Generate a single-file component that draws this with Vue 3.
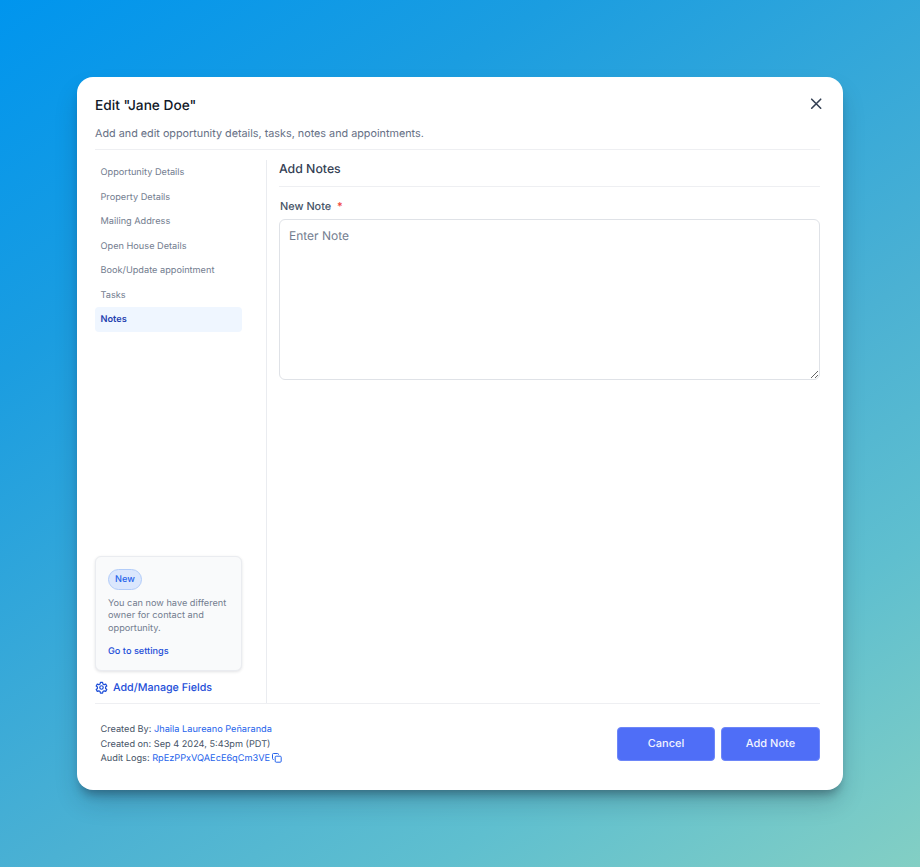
<script setup>
const navItems = ['Opportunity Details', 'Property Details', 'Mailing Address', 'Open House Details', 'Book/Update appointment', 'Tasks', 'Notes']
</script>

<template>
  <div class="page">
    <section class="modal">
      <header class="head">
        <div class="title-row">
          <h1>Edit "Jane Doe"</h1>
          <svg class="close" width="16" height="16" viewBox="0 0 16 16" fill="none" stroke="#344054" stroke-width="1.6" stroke-linecap="round"><path d="M3.7 3.2l9 9M12.7 3.2l-9 9"/></svg>
        </div>
        <p class="sub">Add and edit opportunity details, tasks, notes and appointments.</p>
      </header>
      <div class="body">
        <aside class="side">
          <nav class="nav">
            <a v-for="item in navItems" :key="item" class="nav-item" :class="{ active: item === 'Notes' }">{{ item }}</a>
          </nav>
          <div class="promo">
            <span class="badge">New</span>
            <p>You can now have different owner for contact and opportunity.</p>
            <a class="promo-link">Go to settings</a>
          </div>
          <a class="manage">
            <svg width="13" height="13" viewBox="0 0 24 24" fill="none" stroke="#1d4ed8" stroke-width="2.2" stroke-linejoin="round"><path d="M10 2.5h4l.6 3 2.3 1.3 2.9-1 2 3.4-2.3 2v2.6l2.3 2-2 3.4-2.9-1-2.3 1.3-.6 3h-4l-.6-3-2.3-1.3-2.9 1-2-3.4 2.3-2v-2.6l-2.3-2 2-3.4 2.9 1 2.3-1.3z"/><circle cx="12" cy="12" r="3.2"/></svg>
            Add/Manage Fields
          </a>
        </aside>
        <main class="main">
          <h2>Add Notes</h2>
          <label class="label" for="note">New Note <span class="req">*</span></label>
          <textarea id="note" class="input" placeholder="Enter Note"></textarea>
        </main>
      </div>
      <footer class="foot">
        <div class="meta">
          <div class="meta-row">Created By: <a>Jhaila Laureano Peñaranda</a></div>
          <div class="meta-row">Created on: Sep 4 2024, 5:43pm (PDT)</div>
          <div class="meta-row">Audit Logs: <a>RpEzPPxVQAEcE6qCm3VE</a>
            <svg class="copy" width="10" height="10" viewBox="0 0 10 10" fill="none" stroke="#2563eb" stroke-width="1"><rect x="3.2" y="3.2" width="6" height="6" rx="1"/><path d="M1.8 6.5H1.5a1 1 0 0 1-1-1V1.5a1 1 0 0 1 1-1h4a1 1 0 0 1 1 1v.3"/></svg>
          </div>
        </div>
        <div class="actions">
          <button type="button" class="btn cancel">Cancel</button>
          <button type="button" class="btn">Add Note</button>
        </div>
      </footer>
    </section>
  </div>
</template>

<style scoped>
.page {
  width: 920px;
  height: 867px;
  box-sizing: border-box;
  padding: 77px;
  background: linear-gradient(146deg, #0095ee 0%, #1b9de0 25%, #4bb1d3 60%, #5fbfcf 78%, #83cfc4 100%);
  font-family: Inter, "Liberation Sans", sans-serif;
  text-rendering: geometricPrecision;
  overflow: hidden;
}
.modal {
  width: 766px;
  height: 713px;
  box-sizing: border-box;
  padding: 0 23px 0 18px;
  background: #fff;
  border-radius: 16px;
  box-shadow: 0 8px 10px -4px rgba(16, 24, 40, .35), 0 14px 26px -4px rgba(16, 24, 40, .22);
  display: flex;
  flex-direction: column;
}
.head {
  height: 73px;
  flex: none;
  box-sizing: border-box;
  border-bottom: 1px solid #eeeff2;
}
.title-row {
  height: 28px;
  margin-top: 15px;
  display: flex;
  align-items: center;
  justify-content: space-between;
}
h1 {
  margin: 0;
  font-size: 13.7px;
  font-weight: 500;
  color: #101828;
}
.close { margin-right: -4px; margin-top: -5px; }
.sub {
  margin: 6px 0 0;
  font-size: 10.8px;
  line-height: 16px;
  color: #667085;
}
.body {
  flex: 1;
  min-height: 0;
  display: flex;
  padding-top: 10px;
}
.side {
  width: 172px;
  flex: none;
  box-sizing: border-box;
  padding-right: 24px;
  border-right: 1px solid #eaecf0;
  display: flex;
  flex-direction: column;
}
.nav {
  flex: 1;
  display: flex;
  flex-direction: column;
}
.nav-item {
  height: 24.5px;
  line-height: 26.5px;
  padding-left: 5.5px;
  font-size: 9.2px;
  color: #737d8f;
  border-radius: 4px;
}
.nav-item.active {
  background: #eff6ff;
  color: #1e40af;
  font-weight: 600;
}
.promo {
  height: 115px;
  box-sizing: border-box;
  padding: 12px 12px 0;
  background: #f9fafb;
  border: 1px solid #eaecf0;
  border-radius: 6px;
  box-shadow: 0 1px 3px rgba(16, 24, 40, .12);
}
.badge {
  display: block;
  width: fit-content;
  height: 21px;
  line-height: 20px;
  box-sizing: border-box;
  padding: 0 6px;
  font-size: 9.2px;
  font-weight: 500;
  color: #2563eb;
  background: #dbe7fd;
  border: 1px solid #b2ccf9;
  border-radius: 11px;
}
.promo p {
  margin: 8px 0 0;
  font-size: 9.2px;
  line-height: 12.3px;
  color: #737d8f;
}
.promo-link {
  display: block;
  margin-top: 11px;
  font-size: 9.2px;
  line-height: 12px;
  font-weight: 500;
  color: #1d4ed8;
}
.manage {
  height: 32px;
  display: flex;
  align-items: center;
  gap: 5px;
  font-size: 10.7px;
  font-weight: 500;
  color: #1d4ed8;
}
.main {
  flex: 1;
  min-width: 0;
  padding-left: 12px;
  display: flex;
  flex-direction: column;
}
h2 {
  margin: 0;
  height: 26px;
  line-height: 18px;
  font-size: 12.3px;
  font-weight: 500;
  color: #344054;
  border-bottom: 1px solid #eeeff2;
}
.label {
  margin: 11px 0 0 1px;
  height: 16px;
  line-height: 16px;
  font-size: 10.9px;
  font-weight: 500;
  color: #475467;
}
.req { color: #f04438; margin-left: 3px; }
.input {
  display: block;
  margin-top: 5px;
  width: 100%;
  height: 161px;
  box-sizing: border-box;
  padding: 8px 9px;
  border: 1px solid #dfe2e7;
  border-radius: 6px;
  font: 400 12px/16px Inter, "Liberation Sans", sans-serif;
  text-rendering: geometricPrecision;
  color: #344054;
  outline: none;
}
.input::placeholder { color: #737d8f; opacity: 1; }
.foot {
  flex: none;
  height: 87px;
  box-sizing: border-box;
  border-top: 1px solid #eeeff2;
  padding: 18px 0 0 5.5px;
  display: flex;
  justify-content: space-between;
  align-items: flex-start;
}
.meta {
  font-size: 9.2px;
  color: #475467;
}
.meta-row {
  height: 14.7px;
  line-height: 15px;
  white-space: nowrap;
}
.meta a { color: #2563eb; }
.copy { vertical-align: -1.5px; margin-left: 2px; }
.actions {
  display: flex;
  gap: 6px;
  margin-top: 5px;
}
.btn {
  width: 99px;
  height: 34px;
  padding: 0 0 1px;
  font: 500 11px/1 Inter, "Liberation Sans", sans-serif;
  text-rendering: geometricPrecision;
  color: #f2f4ff;
  background: #4f6ef7;
  border: 1px solid #6d86f8;
  border-radius: 4px;
}
.cancel { width: 98px; }
</style>

<style>
html, body { margin: 0; padding: 0; }
</style>
